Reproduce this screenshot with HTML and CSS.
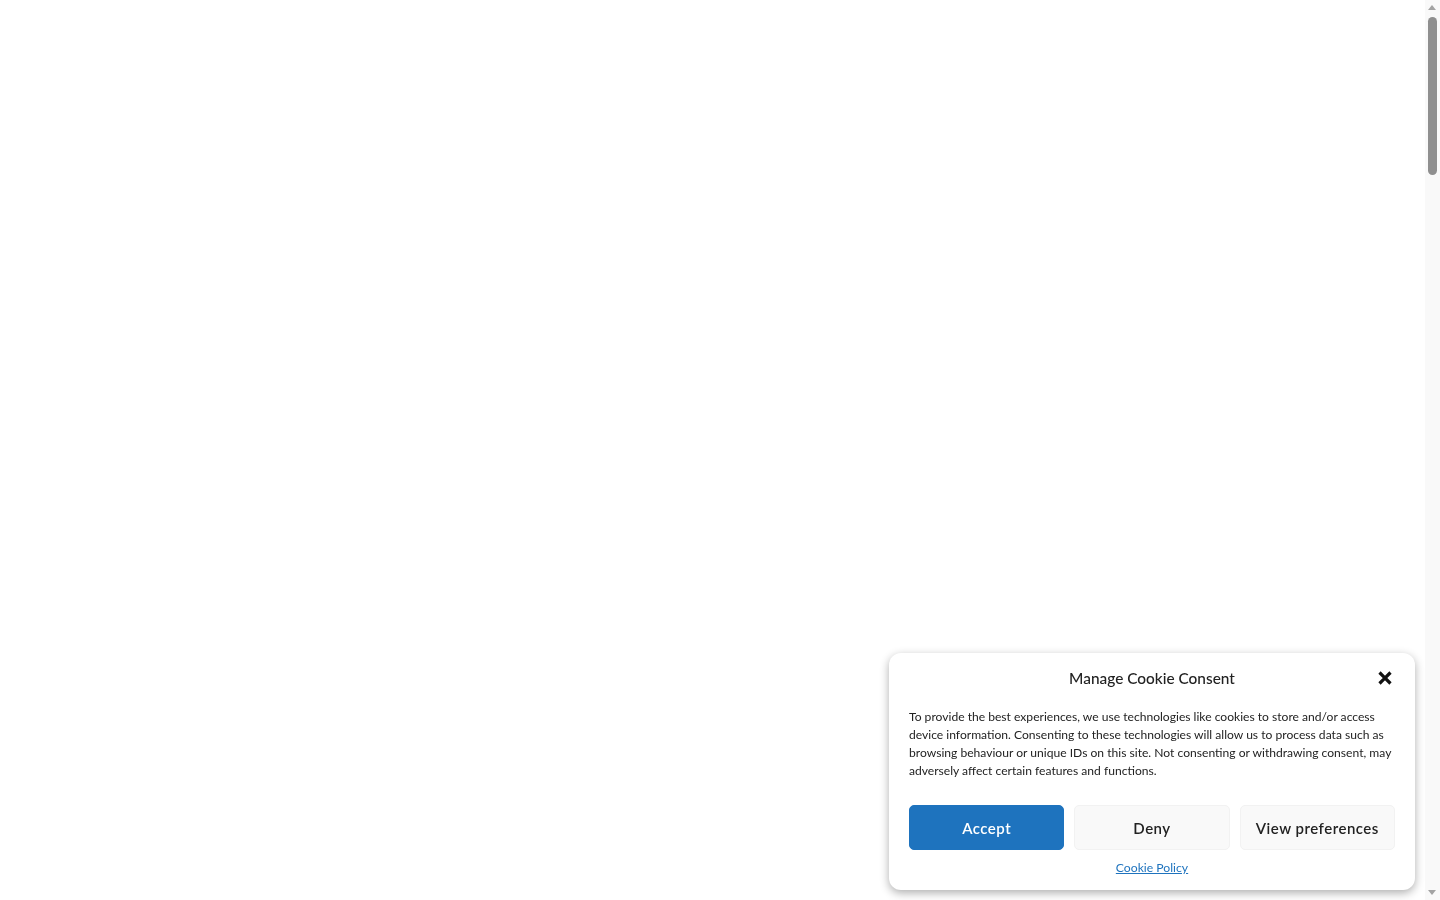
FILE: index.html
```html
<!DOCTYPE html>
<html lang="en">
<head>
<meta charset="utf-8">
<title>Cookie consent</title>
<link rel="stylesheet" href="styles.css">
</head>
<body>
<div class="page"></div>
<div class="scrollbar" aria-hidden="true">
  <span class="arrow arrow-up"></span>
  <span class="thumb"></span>
  <span class="arrow arrow-down"></span>
</div>
<div class="banner" role="dialog" aria-label="Manage Cookie Consent">
  <div class="banner-header">
    <div class="title">Manage Cookie Consent</div>
    <button class="close" aria-label="Close">
      <svg width="16" height="16" viewBox="0 0 16 16"><path d="M2.5 2.5 L13.5 13.5 M13.5 2.5 L2.5 13.5" stroke="#111" stroke-width="3.2" stroke-linecap="butt"/></svg>
    </button>
  </div>
  <p class="message">To provide the best experiences, we use technologies like cookies to store and/or access device information. Consenting to these technologies will allow us to process data such as browsing behaviour or unique IDs on this site. Not consenting or withdrawing consent, may adversely affect certain features and functions.</p>
  <div class="buttons">
    <button class="btn btn-accept">Accept</button>
    <button class="btn btn-secondary">Deny</button>
    <button class="btn btn-secondary">View preferences</button>
  </div>
  <div class="links"><a href="#" class="policy">Cookie Policy</a></div>
</div>
</body>
</html>
```
FILE: styles.css
```css
html, body {
  margin: 0;
  padding: 0;
  background: #ffffff;
  font-family: Lato, "Open Sans", sans-serif;
}
.page {
  height: 900px;
}
.scrollbar {
  position: fixed;
  top: 0;
  right: 0;
  width: 15px;
  height: 900px;
  background: #f9f9f9;
}
.arrow {
  position: absolute;
  left: 3px;
  width: 0;
  height: 0;
  border-left: 4px solid transparent;
  border-right: 4px solid transparent;
}
.arrow-up {
  top: 5px;
  border-bottom: 5px solid #a3a3a3;
}
.arrow-down {
  bottom: 5px;
  border-top: 5px solid #a3a3a3;
}
.thumb {
  position: absolute;
  top: 17px;
  left: 3px;
  width: 9px;
  height: 158px;
  border-radius: 5px;
  background: #8f8f8f;
}
.banner {
  position: fixed;
  right: 25px;
  bottom: 10px;
  width: 526px;
  box-sizing: border-box;
  padding: 12px 20px 13px;
  background: #ffffff;
  border-radius: 12px;
  box-shadow: 0 3px 10px rgba(0, 0, 0, 0.32);
  color: #222222;
}
.banner-header {
  position: relative;
  height: 26px;
  display: flex;
  align-items: center;
  justify-content: center;
}
.title {
  font-size: 15.4px;
  font-weight: 500;
  color: #222222;
}
.close {
  position: absolute;
  right: 2px;
  top: 5px;
  width: 16px;
  height: 16px;
  padding: 0;
  border: 0;
  background: none;
  display: flex;
}
.message {
  margin: 17px 0 0;
  font-size: 12.1px;
  line-height: 18px;
  color: #222222;
}
.buttons {
  margin-top: 25px;
  display: grid;
  grid-template-columns: repeat(3, 1fr);
  gap: 10px;
}
.btn {
  height: 45px;
  border-radius: 5px;
  font-family: inherit;
  font-size: 15px;
  font-weight: 600;
  letter-spacing: 0.5px;
  cursor: pointer;
}
.btn-accept {
  background: #1e73be;
  border: 1px solid #1e73be;
  color: #ffffff;
}
.btn-secondary {
  background: #f9f9f9;
  border: 1px solid #f2f2f2;
  color: #222222;
}
.links {
  margin-top: 7px;
  text-align: center;
  line-height: 18px;
}
.policy {
  font-size: 12.2px;
  color: #1e73be;
  text-decoration: underline;
}
```
